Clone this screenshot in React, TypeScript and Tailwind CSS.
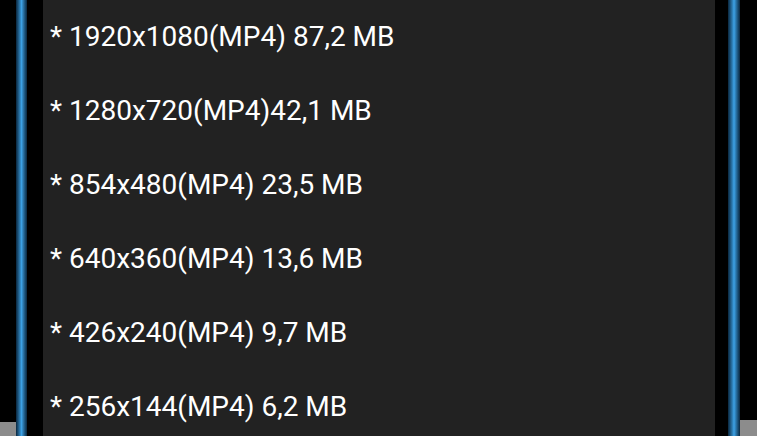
import React from 'react';

const items = [
  '* 1920x1080(MP4) 87,2 MB',
  '* 1280x720(MP4)42,1 MB',
  '* 854x480(MP4) 23,5 MB',
  '* 640x360(MP4) 13,6 MB',
  '* 426x240(MP4) 9,7 MB',
  '* 256x144(MP4) 6,2 MB',
];

const GlowLine: React.FC<{ wide?: boolean }> = ({ wide }) => (
  <div
    className={
      wide
        ? 'w-[12px] h-full bg-gradient-to-r from-[#0a2840] via-[#3da2e6] to-[#0a2840]'
        : 'w-[11px] h-full bg-gradient-to-r from-[#0a2840] via-[#3da2e6] to-[#0a2840]'
    }
  />
);

const App: React.FC = () => {
  return (
    <div className="w-[757px] h-[436px] flex bg-black overflow-hidden" style={{ fontFamily: 'Roboto, "Noto Sans", sans-serif' }}>
      {/* left edge */}
      <div className="w-[16px] h-full flex flex-col">
        <div className="flex-1 bg-black" />
        <div className="h-[14px] bg-[#8c8c8c]" />
      </div>
      <GlowLine />
      <div className="w-[16px] h-full bg-black" />

      {/* list panel */}
      <div className="w-[672px] h-full bg-[#222222] flex flex-col">
        {items.map((t) => (
          <div key={t} className="h-[74px] flex items-center pl-[7px] text-white text-[28px] leading-none shrink-0">
            {t}
          </div>
        ))}
      </div>

      {/* right edge */}
      <div className="w-[13px] h-full bg-black" />
      <GlowLine wide />
      <div className="flex-1 h-full flex flex-col">
        <div className="flex-1 bg-black" />
        <div className="h-[16px] bg-[#8c8c8c]" />
      </div>
    </div>
  );
};

export default App;
